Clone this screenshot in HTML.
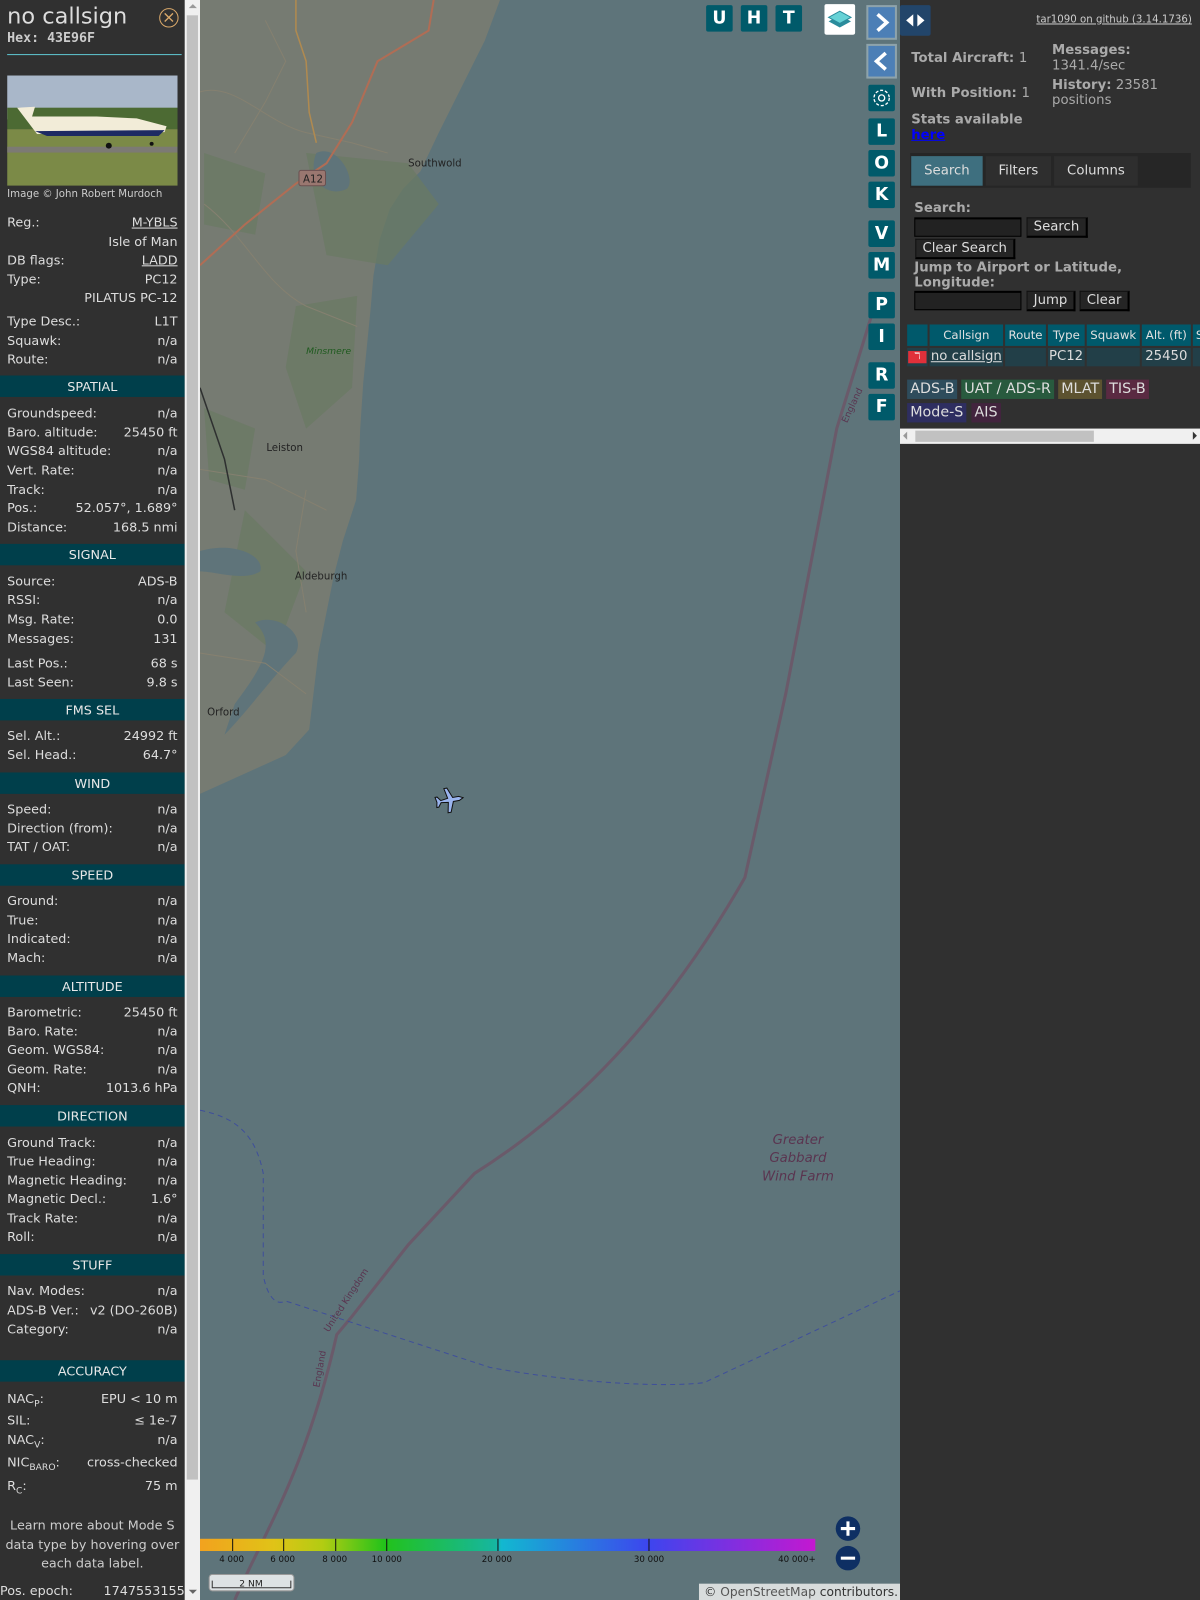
<!DOCTYPE html>
<html><head><meta charset="utf-8"><style>
*{margin:0;padding:0;box-sizing:border-box}
html,body{width:1200px;height:1600px;overflow:hidden;background:#303030}
#w{position:absolute;left:0;top:0;width:1176px;height:1568px;transform:scale(1.020408);transform-origin:0 0;font-family:"DejaVu Sans","Liberation Sans",sans-serif;color:#ddd}
#left{position:absolute;left:0;top:0;width:181px;height:1568px;background:#303030;font-size:12.5px}
.r{position:absolute;left:7px;width:167px;height:18px;line-height:18px;white-space:nowrap}
.r .v{position:absolute;right:0;top:0}
.h{position:absolute;left:0;width:181px;height:21px;line-height:21px;background:#003f4b;text-align:center;font-size:12.5px;color:#e8e8e8}
#sb{position:absolute;left:181px;top:0;width:15px;height:1568px;background:#f0f0f0}
#map{position:absolute;left:196px;top:0;width:686px;height:1568px;background:#5e747a;overflow:hidden}
.mb{position:absolute;width:26px;height:26px;background:#005a6a;color:#fff;font-weight:bold;font-size:17px;text-align:center;line-height:26px;border-radius:2px}
#right{position:absolute;left:882px;top:0;width:294px;height:1568px;background:#303030}
.b{font-weight:bold;color:#aaa;font-size:13px}
.btn{position:absolute;background:#252525;border:1px solid #111;border-right:2px solid #000;border-bottom:2px solid #000;color:#ddd;font-size:13px;height:20px;line-height:17px;padding:0 6px}
.inp{position:absolute;background:#222;border:1px solid #000;border-top:2px solid #000;height:19px;width:105px}
.th{position:absolute;top:318px;height:21px;background:#00596b;color:#e0e0e0;font-size:11.5px;line-height:21px;text-align:center}
.td{position:absolute;top:341px;height:18px;background:#223f48;color:#ddd;font-size:13px;line-height:18px;text-align:center}
.lg{position:absolute;height:19px;line-height:19px;font-size:14px;padding:0 3px}
</style></head><body><div id="w">
<div id="left">
<div style="position:absolute;left:7px;top:4px;font-size:22px;color:#ddd">no callsign</div>
<div style="position:absolute;left:7px;top:30px;font-size:13px;font-weight:bold;font-family:'DejaVu Sans Mono',monospace;color:#ccc">Hex: 43E96F</div>
<div style="position:absolute;left:156px;top:8px;width:19px;height:19px;border:1.5px solid #d9a86a;border-radius:50%;color:#d9a86a;font-size:16px;line-height:15px;text-align:center">×</div>
<div style="position:absolute;left:7px;top:53px;width:171px;height:1px;background:#5fc5d0"></div>
<svg style="position:absolute;left:7px;top:74px" width="167" height="108" viewBox="0 0 171 113" preserveAspectRatio="none">
<rect width="171" height="45" fill="#a9b7c9"/><rect y="33" width="171" height="22" fill="#4c6a33"/>
<rect y="55" width="171" height="58" fill="#7b8a47"/><rect y="73" width="171" height="6" fill="#7c7a74"/>
<path d="M10 33 L28 32 L25 42 L90 42 L130 44 L160 52 L158 58 L30 60 Z" fill="#f2ecd8"/>
<path d="M28 57 L158 56 L152 62 L40 62Z" fill="#1d2a63"/><circle cx="102" cy="72" r="3" fill="#111"/><circle cx="145" cy="70" r="2" fill="#111"/>
</svg>
<div style="position:absolute;left:7px;top:185px;font-size:10px;color:#ccc">Image © John Robert Murdoch</div>
<div class="r" style="top:209px">Reg.:<span class="v" style="text-decoration:underline">M-YBLS</span></div>
<div class="r" style="top:228px"><span class="v">Isle of Man</span></div>
<div class="r" style="top:246px">DB flags:<span class="v" style="text-decoration:underline">LADD</span></div>
<div class="r" style="top:265px">Type:<span class="v">PC12</span></div>
<div class="r" style="top:283px"><span class="v">PILATUS PC-12</span></div>
<div class="r" style="top:306px">Type Desc.:<span class="v">L1T</span></div>
<div class="r" style="top:325px">Squawk:<span class="v">n/a</span></div>
<div class="r" style="top:343px">Route:<span class="v">n/a</span></div>
<div class="h" style="top:368px">SPATIAL</div>
<div class="r" style="top:396px">Groundspeed:<span class="v">n/a</span></div>
<div class="r" style="top:415px">Baro. altitude:<span class="v">25450 ft</span></div>
<div class="r" style="top:433px">WGS84 altitude:<span class="v">n/a</span></div>
<div class="r" style="top:452px">Vert. Rate:<span class="v">n/a</span></div>
<div class="r" style="top:471px">Track:<span class="v">n/a</span></div>
<div class="r" style="top:489px">Pos.:<span class="v">52.057°, 1.689°</span></div>
<div class="r" style="top:508px">Distance:<span class="v">168.5 nmi</span></div>
<div class="h" style="top:533px">SIGNAL</div>
<div class="r" style="top:561px">Source:<span class="v">ADS-B</span></div>
<div class="r" style="top:579px">RSSI:<span class="v">n/a</span></div>
<div class="r" style="top:598px">Msg. Rate:<span class="v">0.0</span></div>
<div class="r" style="top:617px">Messages:<span class="v">131</span></div>
<div class="r" style="top:641px">Last Pos.:<span class="v">68 s</span></div>
<div class="r" style="top:660px">Last Seen:<span class="v">9.8 s</span></div>
<div class="h" style="top:685px">FMS SEL</div>
<div class="r" style="top:712px">Sel. Alt.:<span class="v">24992 ft</span></div>
<div class="r" style="top:731px">Sel. Head.:<span class="v">64.7°</span></div>
<div class="h" style="top:757px">WIND</div>
<div class="r" style="top:784px">Speed:<span class="v">n/a</span></div>
<div class="r" style="top:803px">Direction (from):<span class="v">n/a</span></div>
<div class="r" style="top:821px">TAT / OAT:<span class="v">n/a</span></div>
<div class="h" style="top:847px">SPEED</div>
<div class="r" style="top:874px">Ground:<span class="v">n/a</span></div>
<div class="r" style="top:893px">True:<span class="v">n/a</span></div>
<div class="r" style="top:911px">Indicated:<span class="v">n/a</span></div>
<div class="r" style="top:930px">Mach:<span class="v">n/a</span></div>
<div class="h" style="top:956px">ALTITUDE</div>
<div class="r" style="top:983px">Barometric:<span class="v">25450 ft</span></div>
<div class="r" style="top:1002px">Baro. Rate:<span class="v">n/a</span></div>
<div class="r" style="top:1020px">Geom. WGS84:<span class="v">n/a</span></div>
<div class="r" style="top:1039px">Geom. Rate:<span class="v">n/a</span></div>
<div class="r" style="top:1057px">QNH:<span class="v">1013.6 hPa</span></div>
<div class="h" style="top:1083px">DIRECTION</div>
<div class="r" style="top:1111px">Ground Track:<span class="v">n/a</span></div>
<div class="r" style="top:1129px">True Heading:<span class="v">n/a</span></div>
<div class="r" style="top:1148px">Magnetic Heading:<span class="v">n/a</span></div>
<div class="r" style="top:1166px">Magnetic Decl.:<span class="v">1.6°</span></div>
<div class="r" style="top:1185px">Track Rate:<span class="v">n/a</span></div>
<div class="r" style="top:1203px">Roll:<span class="v">n/a</span></div>
<div class="h" style="top:1229px">STUFF</div>
<div class="r" style="top:1256px">Nav. Modes:<span class="v">n/a</span></div>
<div class="r" style="top:1275px">ADS-B Ver.:<span class="v">v2 (DO-260B)</span></div>
<div class="r" style="top:1294px">Category:<span class="v">n/a</span></div>
<div class="h" style="top:1333px">ACCURACY</div>
<div class="r" style="top:1362px">NAC<sub style="font-size:9px">P</sub>:<span class="v">EPU &lt; 10 m</span></div>
<div class="r" style="top:1383px">SIL:<span class="v">≤ 1e-7</span></div>
<div class="r" style="top:1402px">NAC<sub style="font-size:9px">V</sub>:<span class="v">n/a</span></div>
<div class="r" style="top:1424px">NIC<sub style="font-size:9px">BARO</sub>:<span class="v">cross-checked</span></div>
<div class="r" style="top:1447px">R<sub style="font-size:9px">C</sub>:<span class="v">75 m</span></div>
<div style="position:absolute;left:0;top:1486px;width:181px;text-align:center;font-size:12.5px;line-height:18.5px;color:#ccc">Learn more about Mode S data type by hovering over each data label.</div>
<div class="r" style="top:1550px;left:0;width:181px">Pos. epoch:<span class="v">1747553155</span></div>
</div>
<div id="sb"><div style="position:absolute;left:2px;top:15px;width:11px;height:1435px;background:#c1c1c1"></div>
<div style="position:absolute;left:4px;top:4px;width:0;height:0;border:4px solid transparent;border-bottom-color:#999;border-top:0"></div>
<div style="position:absolute;left:4px;top:1558px;width:0;height:0;border:4px solid transparent;border-top-color:#666;border-bottom:0"></div></div>
<div id="map">
<svg width="686" height="1568" viewBox="196 0 686 1568" style="position:absolute;left:0;top:0">
<path d="M196 0 L490 0 L475 40 L455 80 L430 130 L412 168 L395 185 L382 205 L372 235 L366 270 L363 305 L360 335 L356 375 L353 420 L352 450 L349 490 L336 530 L327 565 L320 600 L312 640 L303 715 L280 740 L196 778 Z" fill="#767b72"/>
<path d="M300 150 L400 160 L430 200 L380 260 L320 250 Z M290 300 L350 290 L345 380 L300 420 L280 360Z M240 500 L300 560 L270 640 L220 600Z M200 150 L260 170 L250 230 L200 220Z M200 400 L250 420 L240 480 L205 470Z" fill="#6a7a62" opacity=".7"/>
<path d="M310 150 C330 140 350 175 340 185 C320 195 300 175 310 150Z M196 540 C230 530 260 545 255 560 C240 570 210 560 196 560Z M250 610 C270 600 300 620 290 640 C270 660 240 700 220 720 L230 690 C260 650 270 630 250 610Z" fill="#5f747a"/>
<path d="M196 90 C230 80 260 120 300 130 L345 140 L380 150 M200 200 C240 230 260 280 300 300 L350 320 M196 460 L260 470 L320 500 M196 640 L260 650 L300 680 M260 20 L280 60 L260 100 L230 150 M300 480 L290 540 L300 600" stroke="#858070" fill="none" stroke-width="1"/>
<path d="M196 260 L240 220 L290 180 L320 160 L345 120 L370 60 L420 30 L425 0" stroke="#b06d55" fill="none" stroke-width="2"/>
<path d="M290 0 L290 30 L300 60 L303 110 L310 140" stroke="#b08a50" fill="none" stroke-width="1.5"/>
<path d="M196 380 L220 450 L230 500" stroke="#2e3030" fill="none" stroke-width="1.5"/>
<path d="M230 1568 C260 1500 300 1440 330 1308 L345 1290 L400 1220 L465 1150 C560 1090 650 1000 730 860 L770 680 L820 420 L860 290" stroke="#6a5a6a" fill="none" stroke-width="3"/>
<path d="M196 1088 C230 1095 250 1110 258 1150 L258 1250 C262 1270 270 1280 280 1275 L480 1340 C560 1355 650 1360 690 1355 L882 1265" stroke="#3f4f9a" fill="none" stroke-dasharray="5,4" stroke-width="1"/>
<g fill="#222" font-family="DejaVu Sans" font-size="10">
<text x="400" y="163">Southwold</text><text x="261" y="442">Leiston</text><text x="289" y="568">Aldeburgh</text><text x="203" y="701">Orford</text>
<text x="300" y="347" fill="#1e5a1e" font-style="italic" font-size="9">Minsmere</text></g>
<rect x="293" y="167" width="26" height="15" rx="2" fill="#9a7770" stroke="#6a5050"/><text x="297" y="179" font-size="10" font-family="DejaVu Sans" fill="#222">A12</text>
<g fill="#5a3550" font-family="DejaVu Sans" font-style="italic" font-size="13" text-anchor="middle"><text x="782" y="1121">Greater</text><text x="782" y="1139">Gabbard</text><text x="782" y="1157">Wind Farm</text></g>
<text x="0" y="0" font-size="9" fill="#5a3550" font-family="DejaVu Sans" transform="translate(322,1306) rotate(-57)">United Kingdom</text>
<text x="0" y="0" font-size="9" fill="#5a3550" font-family="DejaVu Sans" transform="translate(313,1360) rotate(-80)">England</text>
<text x="0" y="0" font-size="9" fill="#5a3550" font-family="DejaVu Sans" transform="translate(830,415) rotate(-65)">England</text>
<g transform="translate(441,784) rotate(80)"><path d="M0 -13 L2 -9 L2 -3 L12 1 L12 4 L2 2 L1 9 L5 12 L5 14 L0 13 L-5 14 L-5 12 L-1 9 L-2 2 L-12 4 L-12 1 L-2 -3 L-2 -9Z" fill="#9ab4ee" stroke="#111" stroke-width="1"/></g>
<defs><linearGradient id="g" x1="0" x2="1"><stop offset="0" stop-color="#f2a21e"/><stop offset=".12" stop-color="#e0c317"/><stop offset=".2" stop-color="#b2cc12"/><stop offset=".3" stop-color="#22c21a"/><stop offset=".48" stop-color="#16b6a0"/><stop offset=".49" stop-color="#12b8d0"/><stop offset=".73" stop-color="#3d45ee"/><stop offset="1" stop-color="#c418d0"/></linearGradient></defs>
<rect x="196" y="1508" width="603" height="12" fill="url(#g)"/>
<g stroke="#111" stroke-width="1"><path d="M228 1508v12M278 1508v12M329 1508v12M379 1508v12M488 1508v12M636 1508v12"/></g>
<g font-family="DejaVu Sans" font-size="8.5" fill="#111" text-anchor="middle"><text x="227" y="1531">4 000</text><text x="277" y="1531">6 000</text><text x="328" y="1531">8 000</text><text x="379" y="1531">10 000</text><text x="487" y="1531">20 000</text><text x="636" y="1531">30 000</text><text x="781" y="1531">40 000+</text></g>
<circle cx="831" cy="1498" r="12" fill="#0e2f63"/><path d="M824 1498h14M831 1491v14" stroke="#fff" stroke-width="3"/>
<circle cx="831" cy="1527" r="12" fill="#0e2f63"/><path d="M824 1527h14" stroke="#fff" stroke-width="3"/>
<rect x="205" y="1543" width="83" height="16" rx="3" fill="#dde2e4" stroke="#999"/><path d="M208 1549v7h77v-7" stroke="#333" fill="none"/><text x="246" y="1555" font-size="9" font-family="DejaVu Sans" text-anchor="middle" fill="#222">2 NM</text>
<rect x="685" y="1552" width="197" height="18" fill="#d8dcdc"/><text x="690" y="1564" font-size="12" font-family="DejaVu Sans" fill="#333">© <tspan fill="#555">OpenStreetMap</tspan> contributors.</text>
</svg>
<div class="mb" style="left:496px;top:5px">U</div><div class="mb" style="left:530px;top:5px">H</div><div class="mb" style="left:564px;top:5px">T</div>
<div style="position:absolute;left:612px;top:4px;width:30px;height:30px;background:#fff;border-radius:2px"><svg width="30" height="30"><path d="M4 17 L15 23 L26 17 L15 11Z" fill="#2a8c9c"/><path d="M4 13 L15 19 L26 13 L15 7Z" fill="#66d2d6" stroke="#2a8c9c"/></svg></div>
<div style="position:absolute;left:653px;top:5px;width:30px;height:34px;background:#8ea3ab;padding:2px"><div style="width:26px;height:30px;background:#4c7fb6"><svg width="26" height="30"><path d="M9 7 L18 15 L9 23" stroke="#fff" stroke-width="3.5" fill="none"/></svg></div></div>
<div style="position:absolute;left:653px;top:43px;width:30px;height:34px;background:#8ea3ab;padding:2px"><div style="width:26px;height:30px;background:#4c7fb6"><svg width="26" height="30"><path d="M17 7 L8 15 L17 23" stroke="#fff" stroke-width="3.5" fill="none"/></svg></div></div>
<div class="mb" style="left:655px;top:83px"><svg width="26" height="26"><circle cx="13" cy="13" r="3" stroke="#fff" fill="none" stroke-width="1.3"/><circle cx="13" cy="13" r="7.5" stroke="#fff" fill="none" stroke-width="1.3" stroke-dasharray="3,1.8"/></svg></div>
<div class="mb" style="left:655px;top:116px">L</div><div class="mb" style="left:655px;top:147px">O</div><div class="mb" style="left:655px;top:178px">K</div>
<div class="mb" style="left:655px;top:216px">V</div><div class="mb" style="left:655px;top:247px">M</div>
<div class="mb" style="left:655px;top:286px">P</div><div class="mb" style="left:655px;top:317px">I</div>
<div class="mb" style="left:655px;top:355px">R</div><div class="mb" style="left:655px;top:386px">F</div>
</div>
<div id="right">
<div style="position:absolute;left:0;top:5px;width:30px;height:30px;background:#22456a;border-radius:2px"><svg width="30" height="30"><path d="M13 9 L6 15 L13 21Z M17 9 L24 15 L17 21Z" fill="#fff"/></svg></div>
<div style="position:absolute;right:8px;top:14px;font-size:10px;color:#ccc;text-decoration:underline">tar1090 on github (3.14.1736)</div>
<div class="b" style="position:absolute;left:11px;top:50px">Total Aircraft: <span style="font-weight:normal">1</span></div>
<div class="b" style="position:absolute;left:11px;top:84px">With Position: <span style="font-weight:normal">1</span></div>
<div class="b" style="position:absolute;left:11px;top:110px">Stats available</div>
<div style="position:absolute;left:11px;top:125px;font-size:13px;font-weight:bold;color:#00f;text-decoration:underline">here</div>
<div style="position:absolute;left:149px;top:42px;font-size:13px;line-height:15px;color:#aaa"><b>Messages:</b><br>1341.4/sec</div>
<div style="position:absolute;left:149px;top:76px;font-size:13px;line-height:15px;color:#aaa"><b>History:</b> 23581<br>positions</div>
<div style="position:absolute;left:10px;top:150px;width:275px;height:34px;background:#262626"></div>
<div style="position:absolute;left:11px;top:153px;width:70px;height:29px;background:#3e6f7f;color:#ddd;font-size:13px;line-height:29px;text-align:center">Search</div>
<div style="position:absolute;left:84px;top:153px;width:64px;height:29px;background:#2e2e2e;color:#ddd;font-size:13px;line-height:29px;text-align:center">Filters</div>
<div style="position:absolute;left:151px;top:153px;width:82px;height:29px;background:#2e2e2e;color:#ddd;font-size:13px;line-height:29px;text-align:center">Columns</div>
<div class="b" style="position:absolute;left:14px;top:197px">Search:</div>
<div class="inp" style="left:14px;top:213px"></div>
<div class="btn" style="left:124px;top:213px">Search</div>
<div class="btn" style="left:15px;top:234px">Clear Search</div>
<div class="b" style="position:absolute;left:14px;top:255px;line-height:15px">Jump to Airport or Latitude,<br>Longitude:</div>
<div class="inp" style="left:14px;top:285px"></div>
<div class="btn" style="left:124px;top:285px">Jump</div>
<div class="btn" style="left:176px;top:285px">Clear</div>
<div class="th" style="left:7px;width:20px"></div><div class="th" style="left:29px;width:72px">Callsign</div><div class="th" style="left:103px;width:40px">Route</div><div class="th" style="left:145px;width:36px">Type</div><div class="th" style="left:183px;width:52px">Squawk</div><div class="th" style="left:237px;width:48px">Alt. (ft)</div><div class="th" style="left:287px;width:7px;text-align:left;padding-left:3px;overflow:hidden">S</div>
<div class="td" style="left:7px;width:20px"><div style="margin:3px 1px;width:18px;height:12px;background:#e0303a;color:#fff;font-size:9px;line-height:12px">ℸ</div></div>
<div class="td" style="left:29px;width:72px;text-decoration:underline">no callsign</div><div class="td" style="left:103px;width:40px"></div><div class="td" style="left:145px;width:36px;text-align:left;padding-left:1px">PC12</div><div class="td" style="left:183px;width:52px"></div><div class="td" style="left:237px;width:48px">25450</div><div class="td" style="left:287px;width:7px"></div>
<div class="lg" style="left:7px;top:372px;background:#2e4c5c;color:#ddd">ADS-B</div>
<div class="lg" style="left:60px;top:372px;background:#285a3e;color:#ddd">UAT / ADS-R</div>
<div class="lg" style="left:155px;top:372px;background:#5c5230;color:#ddd">MLAT</div>
<div class="lg" style="left:202px;top:372px;background:#5a2a42;color:#ddd">TIS-B</div>
<div class="lg" style="left:7px;top:395px;background:#2e2e60;color:#ddd">Mode-S</div>
<div class="lg" style="left:70px;top:395px;background:#42243e;color:#ddd">AIS</div>
<div style="position:absolute;left:0;top:420px;width:294px;height:15px;background:#f0f0f0"><div style="position:absolute;left:15px;top:2px;width:175px;height:11px;background:#c1c1c1"></div>
<div style="position:absolute;left:3px;top:3px;border:4px solid transparent;border-right-color:#999;border-left:0"></div><div style="position:absolute;right:3px;top:3px;border:4px solid transparent;border-left-color:#333;border-right:0"></div></div>
</div>
</div></body></html>
